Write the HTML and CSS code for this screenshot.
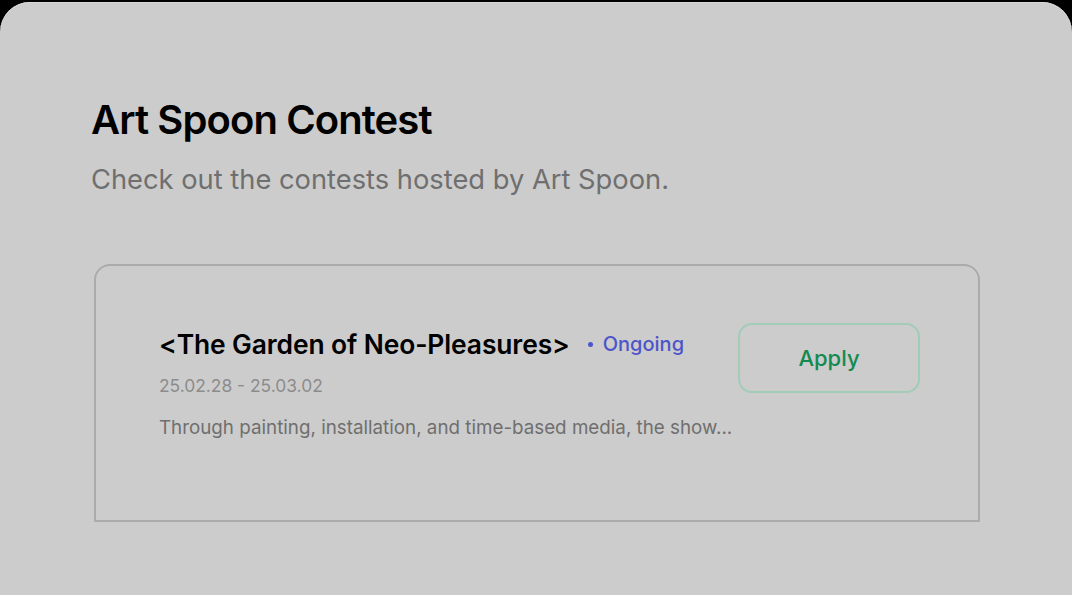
FILE: index.html
```html
<!DOCTYPE html>
<html lang="en">
<head>
<meta charset="utf-8">
<link rel="stylesheet" href="styles.css">
</head>
<body>
<div class="sheet">
  <h1 class="title">Art Spoon Contest</h1>
  <p class="subtitle">Check out the contests hosted by Art Spoon.</p>
  <div class="card">
    <div class="info">
      <div class="head">
        <span class="name">&lt;The Garden of Neo-Pleasures&gt;</span>
        <span class="status"><span class="dot"></span>Ongoing</span>
      </div>
      <div class="date">25.02.28 - 25.03.02</div>
      <div class="desc">Through painting, installation, and time-based media, the show...</div>
    </div>
    <button class="apply">Apply</button>
  </div>
</div>
</body>
</html>
```

FILE: styles.css
```css
html, body {
  margin: 0;
  padding: 0;
  background: #000;
  height: 100%;
  overflow: hidden;
}
body {
  font-family: Inter, "Noto Sans", sans-serif;
  padding-top: 2px;
  box-sizing: border-box;
}
.sheet {
  background: #cccccc;
  height: 100%;
  border-radius: 30px 30px 0 0;
  box-shadow: inset 0 1px 0 #d8d8d8;
  padding: 94px 92px 0 91px;
  box-sizing: border-box;
}
.title {
  margin: 0;
  font-size: 40px;
  font-weight: 600;
  color: #000;
  line-height: 48px;
  letter-spacing: -0.9px;
}
.subtitle {
  margin: 18px 0 0 0;
  font-size: 27.3px;
  line-height: 36px;
  color: #6f6f6f;
}
.card {
  margin: 66px 0 0 3px;
  width: 886px;
  height: 258px;
  box-sizing: border-box;
  border: 2px solid #ababab;
  border-radius: 16px 16px 0 0;
  display: flex;
  align-items: flex-start;
  padding: 60px 58px 0 63px;
}
.info {
  flex: 1;
}
.head {
  display: flex;
  align-items: center;
  gap: 18px;
  height: 36px;
}
.name {
  font-size: 26.4px;
  font-weight: 600;
  color: #000;
  letter-spacing: -0.1px;
}
.status {
  display: flex;
  align-items: center;
  gap: 10px;
  font-size: 20px;
  color: #4c55c9;
  font-weight: 500;
}
.dot {
  width: 5px;
  height: 5px;
  border-radius: 50%;
  background: #4c55c9;
}
.date {
  margin-top: 12px;
  font-size: 17.4px;
  color: #8c8c8c;
  line-height: 24px;
}
.desc {
  margin-top: 17px;
  font-size: 18.8px;
  color: #6f6f6f;
  line-height: 26px;
}
.apply {
  margin-top: -3px;
  width: 182px;
  height: 70px;
  background: transparent;
  border: 2px solid #a2cbb8;
  border-radius: 14px;
  font-family: Inter, "Noto Sans", sans-serif;
  font-size: 22px;
  font-weight: 500;
  color: #138a52;
  box-sizing: border-box;
}
```
